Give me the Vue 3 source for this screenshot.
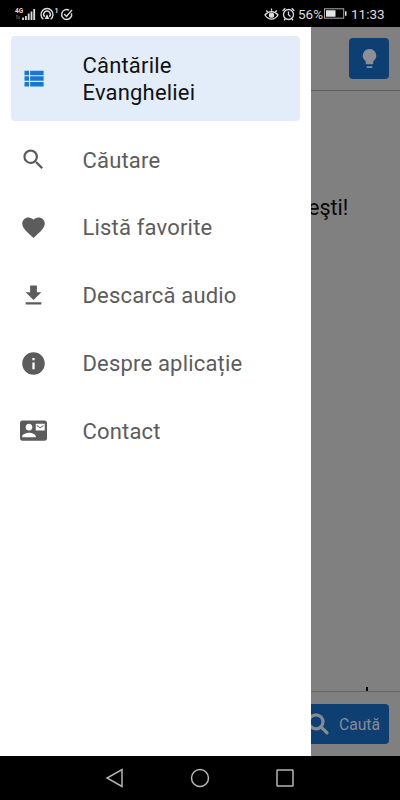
<script setup>
const items = [
  { label: 'Căutare', d: 'M15.5 14h-.79l-.28-.27A6.47 6.47 0 0 0 16 9.5 6.5 6.5 0 1 0 9.5 16c1.61 0 3.09-.59 4.23-1.57l.27.28v.79l5 4.99L20.49 19l-4.99-5zm-6 0C7.01 14 5 11.99 5 9.5S7.01 5 9.5 5 14 7.01 14 9.5 11.99 14 9.5 14z' },
  { label: 'Listă favorite', d: 'M12 21.35l-1.45-1.32C5.4 15.36 2 12.28 2 8.5 2 5.42 4.42 3 7.5 3c1.74 0 3.41.81 4.5 2.09C13.09 3.81 14.76 3 16.5 3 19.58 3 22 5.42 22 8.5c0 3.78-3.4 6.86-8.55 11.54L12 21.35z' },
  { label: 'Descarcă audio', d: 'M19 9h-4V3H9v6H5l7 7 7-7zM5 18v2h14v-2H5z' },
  { label: 'Despre aplicație', d: 'M12 2a10 10 0 1 0 0 20 10 10 0 0 0 0-20zm1 15h-2v-6h2v6zm0-8h-2V7h2v2z' },
  { label: 'Contact', d: 'M21 8V7l-3 2-3-2v1l3 2 3-2zm1-5H2C.9 3 0 3.9 0 5v14c0 1.1.9 2 2 2h20c1.1 0 1.99-.9 1.99-2L24 5c0-1.1-.9-2-2-2zM8 6c1.66 0 3 1.34 3 3s-1.34 3-3 3-3-1.34-3-3 1.34-3 3-3zm6 12H2v-1c0-2 4-3.1 6-3.1s6 1.1 6 3.1v1zm8-6h-8V6h8v6z' },
]
</script>

<template>
  <div class="screen">
    <header class="status">
      <svg class="signals" width="62" height="18" viewBox="0 0 62 18" fill="none" stroke="#ddd">
        <text x="0" y="7.5" class="network">4G</text>
        <path d="M2 10v4m-1-3 1-1m2 1v3m1-1-1 1" stroke="#666" stroke-width=".9" />
        <path d="M8 12.5v2.500M10.900 11v4M13.700 8.500v6.500M16.500 6.500v8.500M19.200 4v11" stroke-width="1.800" />
        <path d="M28.300 14.200A6 6 0 1 1 35.700 14.200M29.600 11.700A3.300 3.300 0 1 1 34.400 11.700" stroke-width="1.400" />
        <path d="M32 9l-2.300 5h4.600z" fill="#ddd" stroke="none" />
        <text x="39.500" y="8" class="count">1</text>
        <path d="M56.500 8.200A5 5 0 1 1 54.200 5.200M49.200 9l2.300 2.500 5.500-6.500" stroke-width="1.400" />
      </svg>
      <div class="right">
        <svg width="32" height="16" viewBox="0 0 32 16" fill="none" stroke="#ddd" stroke-width="1.300">
          <path d="M1 9c3.500-4.500 9.500-4.500 13 0-3.500 5.500-9.500 5.500-13 0zM2.200 4.500l1.700 1.700M7.500 2.500v2.300M12.800 4.500l-1.700 1.700" />
          <circle cx="7.500" cy="9.200" r="2" fill="#ddd" />
          <circle cx="24.500" cy="8.500" r="5" />
          <path d="M24.500 5.500v3.300l2 1.600M18.600 4.800l2.700-2.500M27.700 2.300l2.700 2.500M21.300 12.800l-1.300 1.500M27.700 12.800l1.300 1.500" />
        </svg>
        <span class="percent">56%</span>
        <svg class="battery" width="23" height="11" viewBox="0 0 23 11">
          <rect x=".5" y=".8" width="19.200" height="9.400" fill="none" stroke="#aaa" />
          <path d="M2 2.300h9.500v6.400H2zM21 3.200h1.500v4.600H21z" fill="#e4e4e4" />
        </svg>
        <span class="time">11:33</span>
      </div>
    </header>

    <main class="body">
      <nav class="drawer">
        <a class="item active">
          <svg class="icon" viewBox="0 0 24 24"><path d="M4 14h4v-4H4v4zm0 5h4v-4H4v4zM4 9h4V5H4v4zm5 5h12v-4H9v4zm0 5h12v-4H9v4zM9 5v4h12V5H9z" /></svg>
          <span class="label">Cântările<br>Evangheliei</span>
        </a>
        <a v-for="item in items" :key="item.label" class="item">
          <svg class="icon" viewBox="0 0 24 24"><path :d="item.d" /></svg>
          <span class="label">{{ item.label }}</span>
        </a>
      </nav>
      <section class="page">
        <div class="toolbar">
          <div class="bulb">
            <svg viewBox="0 0 24 24"><path d="M9 21c0 .55.45 1 1 1h4c.55 0 1-.45 1-1v-1H9v1zm3-19a7 7 0 0 0-4 12.740V17c0 .55.45 1 1 1h6c.55 0 1-.45 1-1v-2.260A7 7 0 0 0 12 2z" /></svg>
          </div>
        </div>
        <div class="content">
          <p class="verse">eşti!</p>
          <i class="fragment"></i>
        </div>
        <div class="footer">
          <div class="search">
            <svg width="24" height="24" viewBox="0 0 24 24" fill="none" stroke="#858b93" stroke-width="3.200"><circle cx="9" cy="9.800" r="7" /><path d="M14 14.800l6 6" stroke-linecap="round" /></svg>
            <span>Caută</span>
          </div>
        </div>
      </section>
    </main>

    <footer class="navbar">
      <svg width="20" height="20" viewBox="0 0 20 20"><path d="M17 1.500v17L2 10z" /></svg>
      <svg width="20" height="20" viewBox="0 0 20 20"><circle cx="10" cy="10" r="8.500" /></svg>
      <svg width="20" height="20" viewBox="0 0 20 20"><rect x="2" y="2" width="16" height="16" rx=".5" /></svg>
    </footer>
  </div>
</template>

<style scoped>
.screen {
  width: 400px;
  height: 800px;
  display: flex;
  flex-direction: column;
  overflow: hidden;
  background: #000;
  font-family: Roboto, "Noto Sans", sans-serif;
}
.status {
  height: 27px;
  flex: none;
  display: flex;
  align-items: center;
  justify-content: space-between;
  padding: 0 17px 0 15px;
  box-sizing: border-box;
  color: #ddd;
  font-size: 13.500px;
}
.network { font-size: 6.5px; font-weight: 700; fill: #ddd; stroke: none; }
.count { font-size: 7px; font-weight: 700; fill: #ddd; stroke: none; }
.right { display: flex; align-items: center; }
.percent { margin-left: 2px; width: 26px; white-space: nowrap; }
.battery { margin: 0 4px 0 0; }
.time { width: 32px; white-space: nowrap; }
.body {
  height: 729px;
  flex: none;
  display: flex;
  background: #808080;
}
.drawer {
  width: 311px;
  flex: none;
  box-sizing: border-box;
  padding: 9px 11px;
  background: #fff;
}
.item {
  height: 67.75px;
  box-sizing: border-box;
  padding-left: 8.500px;
  display: flex;
  align-items: center;
  color: #5c5c5c;
  font-size: 22px;
  line-height: 26.500px;
  letter-spacing: .18px;
}
.item.active {
  height: 85px;
  margin-bottom: 5px;
  border-radius: 4px;
  background: #e3edf9;
  color: #111;
}
.label { padding-top: 2px; }
.icon { width: 27px; height: 27px; margin-right: 36px; fill: #5c5c5c; flex: none; }
.active .icon { fill: #1976d2; }
.page { flex: 1; display: flex; flex-direction: column; min-width: 0; overflow: hidden; }
.toolbar {
  height: 63.500px;
  box-sizing: border-box;
  border-bottom: 1px solid #5d5d5d;
  padding: 11px 11px 0 0;
  display: flex;
  justify-content: flex-end;
}
.bulb {
  width: 40px;
  height: 41px;
  border-radius: 4px;
  background: #0d3f73;
  display: flex;
  align-items: center;
  justify-content: center;
}
.bulb svg { width: 23px; height: 23px; fill: #8c8f93; }
.content { flex: 1; display: flex; flex-direction: column; justify-content: space-between; }
.verse { margin: 103px 0 0 -3px; font-size: 21.500px; line-height: 27px; color: #090909; white-space: nowrap; }
.fragment { width: 2px; height: 4px; margin-left: 55px; background: #000; }
.footer {
  height: 65px;
  flex: none;
  box-sizing: border-box;
  border-top: 1px solid #666;
  padding: 12px 11px 0 0;
}
.search {
  height: 40px;
  box-sizing: border-box;
  padding-right: 9px;
  border-radius: 0 4px 4px 0;
  background: #0d3f73;
  color: #858b93;
  font-size: 15.700px;
  display: flex;
  align-items: center;
  justify-content: space-between;
}
.search svg { flex: none; margin-left: -4px; }
.navbar {
  flex: 1;
  display: flex;
  align-items: center;
  justify-content: center;
  gap: 65px;
}
.navbar svg { fill: none; stroke: #b5b5b5; stroke-width: 1.5; }
</style>
